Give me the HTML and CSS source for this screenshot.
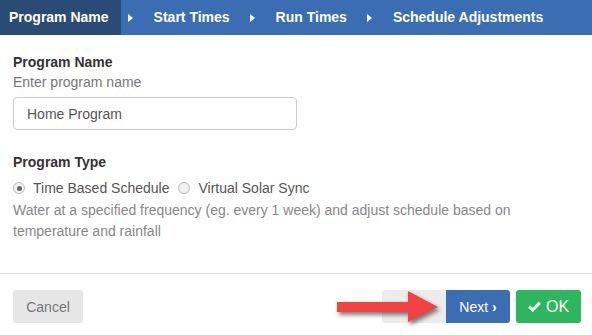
FILE: index.html
```html
<!DOCTYPE html>
<html lang="en">
<head>
  <meta charset="UTF-8" />
  <title>New Program</title>
  <link rel="stylesheet" href="styles.css">
</head>
<body>
  <div class="steps">
    <div class="step active">Program Name</div>
    <span class="step-arrow"></span>
    <div class="step">Start Times</div>
    <span class="step-arrow"></span>
    <div class="step">Run Times</div>
    <span class="step-arrow"></span>
    <div class="step">Schedule Adjustments</div>
  </div>

  <div class="content">
    <div class="field-label">Program Name</div>
    <div class="field-hint">Enter program name</div>
    <input class="text-input" type="text" value="Home Program">

    <div class="field-label type-label">Program Type</div>
    <div class="radio-row">
      <label class="radio-option">
        <span class="radio checked"></span>
        <span>Time Based Schedule</span>
      </label>
      <label class="radio-option">
        <span class="radio"></span>
        <span>Virtual Solar Sync</span>
      </label>
    </div>
    <p class="type-desc">Water at a specified frequency (eg. every 1 week) and adjust schedule based on temperature and rainfall</p>
  </div>

  <div class="footer">
    <button class="btn btn-cancel">Cancel</button>
    <div class="footer-right">
      <div class="btn-group">
        <button class="btn btn-back"></button>
        <button class="btn btn-next">Next <b>&rsaquo;</b></button>
      </div>
      <button class="btn btn-ok">
        <svg class="check" width="13" height="11" viewBox="0 0 13 11">
          <path d="M1.2 5.6 L4.8 9 L11.8 1.8" fill="none" stroke="#fff" stroke-width="3" stroke-linejoin="miter"/>
        </svg>
        OK
      </button>
    </div>
    <!-- pointer arrow drawn over the buttons -->
    <svg class="pointer" width="106" height="36" viewBox="0 0 106 36">
      <polygon points="2,13 73,13 73,2 103,18 73,33 73,23 2,23" fill="#f24242"/>
    </svg>
  </div>
</body>
</html>
```

FILE: styles.css
```css
body {
  margin: 0;
  background: #fff;
  font-family: "Liberation Sans", Arial, sans-serif;
  font-size: 14px;
  color: #333;
}

.steps {
  display: flex;
  align-items: center;
  height: 35px;
  background: #3b6db3;
  color: #fff;
  font-weight: bold;
}

.step {
  padding: 0 20px 0 21px;
  line-height: 35px;
}

.step.active {
  background: #2a4b76;
  padding: 0 12px 0 9px;
  margin-right: 7px;
}

.step-arrow {
  width: 0;
  height: 0;
  border-left: 5px solid #fff;
  border-top: 4px solid transparent;
  border-bottom: 4px solid transparent;
}

.content {
  padding: 17px 13px 31px;
}

.field-label {
  font-weight: bold;
  line-height: 20px;
  color: #333;
}

.field-hint {
  line-height: 20px;
  color: #777;
}

.text-input {
  display: block;
  box-sizing: border-box;
  width: 284px;
  height: 33px;
  margin-top: 5px;
  padding: 0 13px;
  border: 1px solid #ccc;
  border-radius: 4px;
  font-family: inherit;
  font-size: 14px;
  color: #555;
}

.type-label {
  margin-top: 22px;
}

.radio-row {
  display: flex;
  margin-top: 6px;
  line-height: 20px;
  color: #555;
}

.radio-option {
  display: flex;
  align-items: center;
  margin-right: 9px;
}

.radio {
  box-sizing: border-box;
  width: 12px;
  height: 12px;
  margin-right: 8px;
  border: 1px solid #bbb;
  border-radius: 50%;
  background: #f0f0f0;
  position: relative;
}

.radio.checked::after {
  content: "";
  position: absolute;
  left: 2.5px;
  top: 2.5px;
  width: 5px;
  height: 5px;
  border-radius: 50%;
  background: #666;
}

.type-desc {
  margin: 2px 0 0;
  line-height: 21px;
  color: #888;
}

.footer {
  position: relative;
  display: flex;
  justify-content: space-between;
  padding: 16px 11px 16px 13px;
  border-top: 1px solid #e0e0e0;
}

.footer-right {
  display: flex;
  gap: 6px;
}

.btn-group {
  display: flex;
}

.btn {
  height: 33px;
  border: none;
  border-radius: 3px;
  font-family: inherit;
  font-size: 14px;
  cursor: pointer;
}

.btn-cancel {
  width: 70px;
  background: #e6e6e6;
  color: #777;
}

.btn-back {
  width: 64px;
  background: #ececec;
  border-radius: 3px 0 0 3px;
}

.btn-next {
  width: 64px;
  background: #3b6db3;
  color: #fff;
  border-radius: 0 3px 3px 0;
}

.btn-ok {
  width: 65px;
  background: #2db65d;
  color: #fff;
  font-size: 16px;
  display: flex;
  align-items: center;
  justify-content: center;
  gap: 5px;
}

.pointer {
  position: absolute;
  left: 335px;
  top: 15px;
  filter: drop-shadow(2px 3px 2px rgba(0, 0, 0, 0.5));
}
```
